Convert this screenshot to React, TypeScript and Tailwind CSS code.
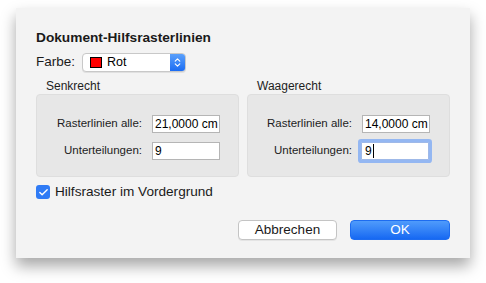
import { Check, ChevronsUpDown } from "lucide-react";

const font = { fontFamily: '"Liberation Sans", Arial, sans-serif' };

function Field({ label, value, focused, right }: { label: string; value: string; focused?: boolean; right?: boolean }) {
  return (
    <div className="flex items-center h-[18px]">
      <span
        className={
          right
            ? "w-[104px] text-right text-[11.5px] text-[#1d1d1d] whitespace-nowrap"
            : "w-[105px] text-right text-[11.5px] text-[#1d1d1d] whitespace-nowrap"
        }
      >
        {label}
      </span>
      <div
        className={
          focused
            ? "ml-[9px] w-[68px] h-[18px] bg-white border border-[#9fb9e8] ring-[3px] ring-[#80abf5]/80 rounded-[1px] flex items-center pl-[3px] text-[12px] text-black whitespace-nowrap"
            : "ml-[10px] w-[68px] h-[18px] bg-white border border-[#b5b5b5] flex items-center pl-[2px] text-[12px] text-black whitespace-nowrap overflow-hidden"
        }
      >
        {value}
        {focused && <span className="w-[1px] h-[14px] bg-black ml-[1px]" />}
      </div>
    </div>
  );
}

function Group({ title, first, second, right }: { title: string; first: string; second: string; right?: boolean }) {
  return (
    <div className="flex flex-col">
      <div className="pl-[10px] h-[13px] text-[12px] leading-[13px] text-[#1d1d1d] -mt-[1px] mb-[1px]">{title}</div>
      <div className="h-[83px] bg-[#e7e7e7] border border-[#dedede] rounded-[4px] pt-[20px] pb-[16px] flex flex-col gap-[9px]">
        <Field label="Rasterlinien alle:" value={first} right={right} />
        <Field label="Unterteilungen:" value={second} focused={right} right={right} />
      </div>
    </div>
  );
}

export default function App() {
  return (
    <div className="w-[486px] h-[283px] bg-white overflow-hidden" style={font}>
      <div className="ml-[16px] mt-[8px] w-[454px] h-[250px] bg-[#f3f3f3] shadow-[0_8px_14px_rgba(0,0,0,0.35)] px-[20px] pt-[22px] flex flex-col">
        <div className="h-[16px] text-[13.7px] leading-[16px] font-bold text-[#1a1a1a]">Dokument-Hilfsrasterlinien</div>

        <div className="mt-[7px] flex items-center h-[19px]">
          <span className="text-[13.5px] text-[#1a1a1a]">Farbe:</span>
          <div className="ml-[7px] w-[104px] h-[19px] bg-white border border-[#c8c8c8] rounded-[4px] flex items-center shadow-[0_1px_0_rgba(0,0,0,0.08)] overflow-hidden">
            <span className="ml-[7px] w-[12px] h-[11px] bg-[#ff0000] border border-black" />
            <span className="ml-[5px] text-[12.5px] text-black">Rot</span>
            <div className="ml-auto w-[15px] h-full bg-gradient-to-b from-[#5aa0fb] to-[#1a6cf3] flex items-center justify-center">
              <ChevronsUpDown size={11} strokeWidth={2.5} className="text-white" />
            </div>
          </div>
        </div>

        <div className="mt-[9px] grid grid-cols-2 gap-[8px]">
          <Group title="Senkrecht" first="21,0000 cm" second="9" />
          <Group title="Waagerecht" first="14,0000 cm" second="9" right />
        </div>

        <div className="mt-[8px] flex items-center h-[14px]">
          <div className="w-[14px] h-[14px] rounded-[3px] bg-[#2f7bf5] flex items-center justify-center">
            <Check size={11} strokeWidth={3} className="text-white" />
          </div>
          <span className="ml-[5px] text-[13.6px] text-[#1a1a1a]">Hilfsraster im Vordergrund</span>
        </div>

        <div className="mt-[21px] flex justify-end gap-[13px]">
          <div className="w-[99px] h-[20px] bg-white border border-[#c4c4c4] rounded-[4px] flex items-center justify-center text-[13.5px] text-[#1a1a1a] shadow-[0_1px_0_rgba(0,0,0,0.06)]">
            Abbrechen
          </div>
          <div className="w-[100px] h-[20px] bg-gradient-to-b from-[#4f9bfb] to-[#1668f2] border border-[#1d6cf0] rounded-[4px] flex items-center justify-center text-[13.5px] text-white">
            OK
          </div>
        </div>
      </div>
    </div>
  );
}
